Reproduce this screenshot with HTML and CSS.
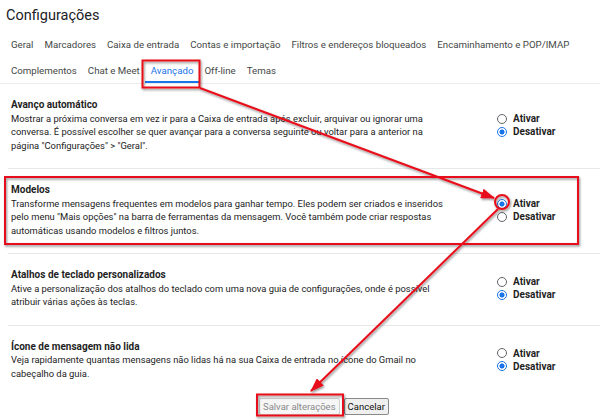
FILE: index.html
```html
<!DOCTYPE html>
<html lang="pt-BR">
<head>
<meta charset="utf-8">
<title>Configurações</title>
<link rel="stylesheet" href="styles.css">
</head>
<body>
<div class="page">
  <h1 class="title">Configurações</h1>
  <nav class="tabs">
    <div class="tabrow">
      <span class="tab">Geral</span>
      <span class="tab">Marcadores</span>
      <span class="tab">Caixa de entrada</span>
      <span class="tab">Contas e importação</span>
      <span class="tab">Filtros e endereços bloqueados</span>
      <span class="tab">Encaminhamento e POP/IMAP</span>
    </div>
    <div class="tabrow">
      <span class="tab">Complementos</span>
      <span class="tab">Chat e Meet</span>
      <span class="tab active">Avançado</span>
      <span class="tab">Off-line</span>
      <span class="tab">Temas</span>
    </div>
  </nav>

  <section class="setting">
    <div class="text">
      <div class="setting-title">Avanço automático</div>
      <div class="desc">Mostrar a próxima conversa em vez ir para a Caixa de entrada após excluir, arquivar ou ignorar uma<br>conversa. É possível escolher se quer avançar para a conversa seguinte ou voltar para a anterior na<br>página "Configurações" &gt; "Geral".</div>
    </div>
    <div class="options">
      <div class="option"><span class="radio"></span>Ativar</div>
      <div class="option"><span class="radio on"></span>Desativar</div>
    </div>
  </section>

  <section class="setting">
    <div class="text">
      <div class="setting-title">Modelos</div>
      <div class="desc">Transforme mensagens frequentes em modelos para ganhar tempo. Eles podem ser criados e inseridos<br>pelo menu "Mais opções" na barra de ferramentas da mensagem. Você também pode criar respostas<br>automáticas usando modelos e filtros juntos.</div>
    </div>
    <div class="options">
      <div class="option"><span class="radio on"></span>Ativar</div>
      <div class="option"><span class="radio"></span>Desativar</div>
    </div>
  </section>

  <section class="setting">
    <div class="text">
      <div class="setting-title">Atalhos de teclado personalizados</div>
      <div class="desc">Ative a personalização dos atalhos do teclado com uma nova guia de configurações, onde é possível<br>atribuir várias ações às teclas.</div>
    </div>
    <div class="options">
      <div class="option"><span class="radio"></span>Ativar</div>
      <div class="option"><span class="radio on"></span>Desativar</div>
    </div>
  </section>

  <section class="setting last">
    <div class="text">
      <div class="setting-title">Ícone de mensagem não lida</div>
      <div class="desc">Veja rapidamente quantas mensagens não lidas há na sua Caixa de entrada no ícone do Gmail no<br>cabeçalho da guia.</div>
    </div>
    <div class="options">
      <div class="option"><span class="radio"></span>Ativar</div>
      <div class="option"><span class="radio on"></span>Desativar</div>
    </div>
  </section>

  <div class="actions">
    <button class="btn" disabled>Salvar alterações</button>
    <button class="btn">Cancelar</button>
  </div>

  <svg class="annotations" width="600" height="420" viewBox="0 0 600 420">
    <defs>
      <filter id="sh" x="-20%" y="-20%" width="140%" height="140%">
        <feDropShadow dx="1" dy="1.5" stdDeviation="1" flood-color="#000" flood-opacity="0.45"/>
      </filter>
      <marker id="ah" markerUnits="userSpaceOnUse" markerWidth="14" markerHeight="10" refX="13" refY="5" orient="auto">
        <path d="M0,0 L14,5 L0,10 Z" fill="#e8101a"/>
      </marker>
    </defs>
    <g filter="url(#sh)" fill="none" stroke="#e8101a" stroke-width="2">
      <rect x="142.5" y="60.5" width="57" height="27"/>
      <rect x="5" y="177" width="573" height="67"/>
      <rect x="257" y="394.5" width="86" height="21"/>
      <circle cx="502" cy="202" r="7"/>
      <line x1="200" y1="88" x2="494" y2="198" marker-end="url(#ah)"/>
      <line x1="498" y1="209" x2="311" y2="391" marker-end="url(#ah)"/>
    </g>
  </svg>
</div>
</body>
</html>
```

FILE: styles.css
```css
html, body {
  margin: 0;
  padding: 0;
  background: #fff;
}

.page {
  position: relative;
  width: 600px;
  height: 420px;
  overflow: hidden;
  font-family: Roboto, "Liberation Sans", Arial, sans-serif;
  color: #222;
}

.title {
  margin: 0;
  box-sizing: border-box;
  height: 31px;
  padding: 6px 0 0 6px;
  font-size: 14.5px;
  line-height: 20px;
  font-weight: 400;
  color: #202124;
}

.tabs {
  border-bottom: 1px solid #ececec;
  padding-left: 5.5px;
}

.tabrow {
  display: flex;
  height: 26px;
}

.tab {
  display: flex;
  align-items: center;
  padding: 0 5.5px;
  font-size: 9.7px;
  color: #444746;
  white-space: nowrap;
}

.tab.active {
  color: #1a73e8;
  box-shadow: inset 0 -2px 0 #1a73e8;
}

.setting {
  display: grid;
  grid-template-columns: 486px 1fr;
  align-items: center;
  margin-left: 8px;
  padding: 14px 0 16px 3px;
  border-bottom: 1px solid #e8e8e8;
}

.setting.last {
  border-bottom: none;
}

.setting-title {
  font-size: 10px;
  line-height: 13.5px;
  font-weight: 700;
  color: #1f1f1f;
}

.desc {
  font-size: 9.4px;
  line-height: 13.5px;
  color: #222;
  white-space: nowrap;
}

.options {
  display: flex;
  flex-direction: column;
}

.option {
  display: flex;
  align-items: center;
  height: 13px;
  font-size: 10px;
  font-weight: 700;
  color: #1f1f1f;
}

.radio {
  box-sizing: border-box;
  width: 10px;
  height: 10px;
  margin-right: 6px;
  border: 1px solid #5f6368;
  border-radius: 50%;
  background: #fff;
}

.radio.on {
  border-color: #1a73e8;
  background: radial-gradient(circle, #1a73e8 0 2.3px, #fff 2.8px);
}

.actions {
  display: flex;
  gap: 4px;
  padding: 2px 0 0 259px;
}

.btn {
  box-sizing: border-box;
  height: 17px;
  padding: 0 3px;
  font-family: Roboto, "Liberation Sans", Arial, sans-serif;
  font-size: 9.5px;
  color: #111;
  background: #efefef;
  border: 1px solid #8a8a8a;
  border-radius: 2px;
}

.btn:disabled {
  color: #8a8a8a;
  background: #f6f6f6;
  border-color: #cfcfcf;
}

.annotations {
  position: absolute;
  left: 0;
  top: 0;
  pointer-events: none;
}
```
